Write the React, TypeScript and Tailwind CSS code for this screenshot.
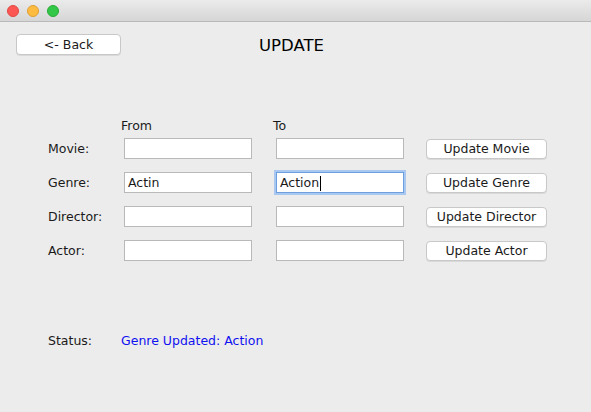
import React from "react";

const rows = [
  { label: "Movie:", from: "", to: "", btn: "Update Movie" },
  { label: "Genre:", from: "Actin", to: "Action", btn: "Update Genre", focus: true },
  { label: "Director:", from: "", to: "", btn: "Update Director" },
  { label: "Actor:", from: "", to: "", btn: "Update Actor" },
];

const Btn = ({ children, className = "" }: { children: React.ReactNode; className?: string }) => (
  <div
    className={`flex items-center justify-center pt-[1px] bg-white border border-[#c8c8c8] rounded-[4px] shadow-[0_1px_0_rgba(0,0,0,0.08)] text-[12.5px] text-[#1a1a1a] ${className}`}
  >
    {children}
  </div>
);

export default function App() {
  return (
    <div
      className="w-[591px] h-[412px] bg-[#ececec] flex flex-col overflow-hidden"
      style={{ fontFamily: '"Lucida Grande", "DejaVu Sans", sans-serif' }}
    >
      {/* title bar */}
      <div className="h-[22px] bg-gradient-to-b from-[#ebebeb] to-[#d6d6d6] border-b border-[#b9b9b9] flex items-center gap-[8px] pl-[7px]">
        <span className="w-[12px] h-[12px] rounded-full bg-[#fc5753] border border-[#df4744]" />
        <span className="w-[12px] h-[12px] rounded-full bg-[#fdbc40] border border-[#de9f34]" />
        <span className="w-[12px] h-[12px] rounded-full bg-[#33c748] border border-[#27aa35]" />
      </div>

      <div className="flex items-start pl-[16px] mt-[12px] h-[21px]">
        <Btn className="w-[105px] h-[21px]">&lt;- Back</Btn>
        <div className="ml-[138px] mt-[2px] text-[16.5px] leading-[20px] text-black">UPDATE</div>
      </div>

      <div className="pl-[48px] mt-[63px] flex flex-col">
        <div className="flex text-[12.5px] leading-[16px] text-[#1a1a1a] h-[16px]">
          <span className="ml-[73px] w-[152px]">From</span>
          <span>To</span>
        </div>
        <div className="flex flex-col gap-[13px] mt-[4px]">
          {rows.map((r) => (
            <div key={r.label} className="flex items-center h-[21px] text-[12.5px] text-[#1a1a1a]">
              <span className="w-[76px] pt-[2px]">{r.label}</span>
              <div className="w-[128px] h-[21px] bg-white border border-[#b9b9b9] flex items-center px-[3px] pt-[1px]">
                {r.from}
              </div>
              <div
                className={`ml-[24px] w-[128px] h-[21px] bg-white flex items-center px-[3px] pt-[1px] ${
                  r.focus
                    ? "border border-[#6d9ee0] outline outline-2 outline-[#a9c8f0]"
                    : "border border-[#b9b9b9]"
                }`}
              >
                {r.to}
                {r.focus && <span className="w-[1px] h-[15px] bg-black ml-[1px]" />}
              </div>
              <Btn className="ml-[22px] w-[121px] h-[20px]">{r.btn}</Btn>
            </div>
          ))}
        </div>
        <div className="flex mt-[72px] text-[12.5px] leading-[16px]">
          <span className="w-[73px] text-[#1a1a1a]">Status:</span>
          <span className="text-[#1010f0]">Genre Updated: Action</span>
        </div>
      </div>
    </div>
  );
}
